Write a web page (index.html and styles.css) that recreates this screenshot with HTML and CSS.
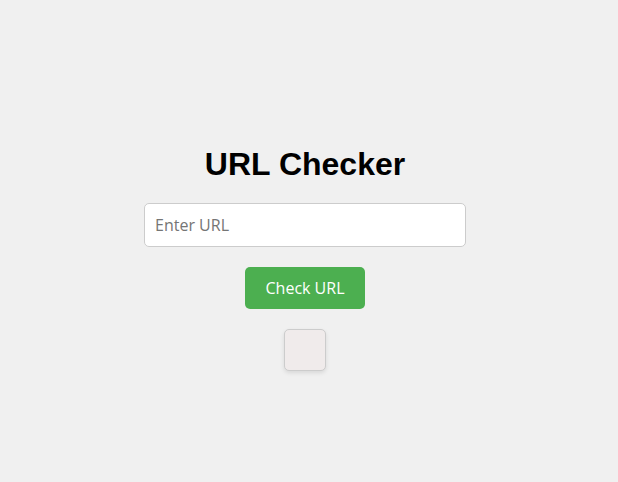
FILE: index.html
```html
<!DOCTYPE html>
<html>
<head>
<meta charset="utf-8">
<link rel="stylesheet" href="styles.css">
</head>
<body>
<div class="container">
  <h1 class="title">URL Checker</h1>
  <input class="url-input" type="text" placeholder="Enter URL">
  <button class="check-btn">Check URL</button>
  <div class="result"></div>
</div>
</body>
</html>
```
FILE: styles.css
```css
html, body {
  margin: 0;
  padding: 0;
}
body {
  background: #f0f0f0;
  font-family: "Open Sans", sans-serif;
  height: 100vh;
}
.container {
  display: flex;
  flex-direction: column;
  align-items: center;
  padding-top: 146px;
  padding-right: 8px;
}
.title {
  font-family: "Liberation Sans", Arial, sans-serif;
  font-weight: bold;
  font-size: 32px;
  margin: 0 0 20px 0;
  color: #000;
}
.url-input {
  box-sizing: border-box;
  width: 322px;
  height: 44px;
  padding: 10px;
  border: 1px solid #ccc;
  border-radius: 5px;
  font-family: "Open Sans", sans-serif;
  font-size: 16px;
  background: #fff;
  margin: 0 0 20px 0;
  outline: none;
}
.url-input::placeholder {
  color: #757575;
}
.check-btn {
  box-sizing: border-box;
  width: 120px;
  height: 42px;
  background: #4caf50;
  color: #fff;
  border: none;
  border-radius: 5px;
  font-family: "Open Sans", sans-serif;
  font-size: 16px;
  padding: 10px 20px;
  margin: 0 0 20px 0;
  cursor: pointer;
}
.result {
  box-sizing: border-box;
  width: 42px;
  height: 42px;
  padding: 20px;
  border: 1px solid #ccc;
  border-radius: 5px;
  background: #f0ebeb;
  box-shadow: 0 2px 4px rgba(0, 0, 0, 0.1);
}
```
